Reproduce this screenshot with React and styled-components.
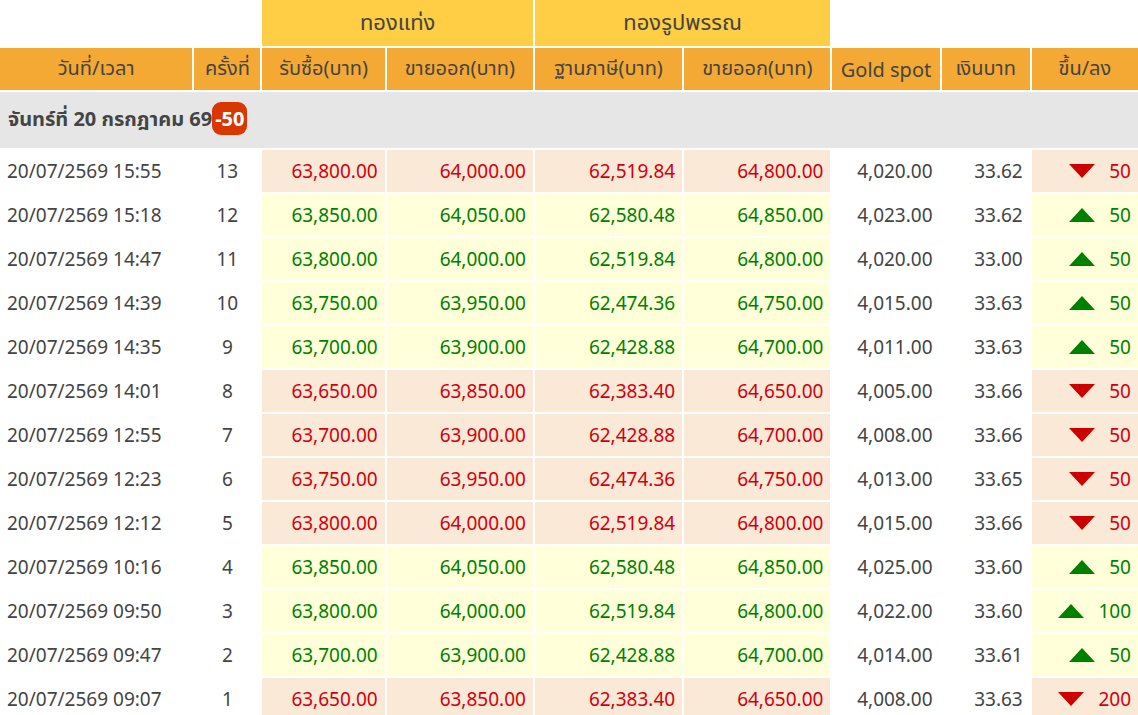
import React from "react";
import styled, { createGlobalStyle } from "styled-components";

const G = createGlobalStyle`
  body { margin: 0; background: #fff; font-family: "Noto Sans", "Noto Sans Thai", "DejaVu Sans", sans-serif; overflow: hidden; }
  * { box-sizing: border-box; }
`;
const Table = styled.table`
  width: 1142px; margin-left: -2px; margin-top: -2px; border-spacing: 2px; table-layout: fixed; font-size: 19px; color: #444;
`;
const Top = styled.th`
  background: ${p => (p.$blank ? "#fff" : "#ffce44")}; height: 46px; font-weight: 400; font-size: 22px; color: #444; padding: 0;
`;
const Head = styled.th`
  background: #f4a934; height: 42px; font-weight: 400; color: #444; padding: 0; font-size: 20px; white-space: nowrap;
`;
const Group = styled.td`
  background: #e6e6e6; height: 56px; font-weight: 700; padding: 0 8px; font-size: 20px;
`;
const Badge = styled.span`
  background: #d93600; color: #fff; border-radius: 9px; padding: 3px 3px; font-weight: 700;
`;
const Cell = styled.td`
  height: 42px; padding: 0 7px; text-align: ${p => p.$align || "right"};
  background: ${p => (p.$tone === "up" ? "#ffffd9" : p.$tone === "down" ? "#fbe9d7" : "#fff")};
  color: ${p => (p.$tone === "up" ? "#008000" : p.$tone === "down" ? "#d0000f" : "#444")};
  white-space: nowrap;
`;
const Tri = styled.svg` vertical-align: middle; margin-right: 14px; margin-top: -3px; `;

const rows = [
  ["15:55",13,"63,800.00","64,000.00","62,519.84","64,800.00","4,020.00","33.62",-50],
  ["15:18",12,"63,850.00","64,050.00","62,580.48","64,850.00","4,023.00","33.62",50],
  ["14:47",11,"63,800.00","64,000.00","62,519.84","64,800.00","4,020.00","33.00",50],
  ["14:39",10,"63,750.00","63,950.00","62,474.36","64,750.00","4,015.00","33.63",50],
  ["14:35",9,"63,700.00","63,900.00","62,428.88","64,700.00","4,011.00","33.63",50],
  ["14:01",8,"63,650.00","63,850.00","62,383.40","64,650.00","4,005.00","33.66",-50],
  ["12:55",7,"63,700.00","63,900.00","62,428.88","64,700.00","4,008.00","33.66",-50],
  ["12:23",6,"63,750.00","63,950.00","62,474.36","64,750.00","4,013.00","33.65",-50],
  ["12:12",5,"63,800.00","64,000.00","62,519.84","64,800.00","4,015.00","33.66",-50],
  ["10:16",4,"63,850.00","64,050.00","62,580.48","64,850.00","4,025.00","33.60",50],
  ["09:50",3,"63,800.00","64,000.00","62,519.84","64,800.00","4,022.00","33.60",100],
  ["09:47",2,"63,700.00","63,900.00","62,428.88","64,700.00","4,014.00","33.61",50],
  ["09:07",1,"63,650.00","63,850.00","62,383.40","64,650.00","4,008.00","33.63",-200],
];
const heads = ["วันที่/เวลา","ครั้งที่","รับซื้อ(บาท)","ขายออก(บาท)","ฐานภาษี(บาท)","ขายออก(บาท)","Gold spot","เงินบาท","ขึ้น/ลง"];

export default function App() {
  return (
    <>
      <G />
      <Table>
        <colgroup>
          {[192, 66, 122, 146, 147, 146, 107, 88, 106].map((w, i) => <col key={i} style={{ width: w }} />)}
        </colgroup>
        <thead>
          <tr>
            <Top $blank colSpan={2} />
            <Top colSpan={2}>ทองแท่ง</Top>
            <Top colSpan={2}>ทองรูปพรรณ</Top>
            <Top $blank colSpan={3} />
          </tr>
          <tr>
            {heads.map((h, i) => <Head key={i}>{h}</Head>)}
          </tr>
        </thead>
        <tbody>
          <tr><Group colSpan={9}>จันทร์ที่ 20 กรกฎาคม 69<Badge>-50</Badge></Group></tr>
          {rows.map(r => {
            const t = r[8] > 0 ? "up" : "down";
            return (
              <tr key={r[1]}>
                <Cell $align="left">20/07/2569 {r[0]}</Cell>
                <Cell $align="center">{r[1]}</Cell>
                <Cell $tone={t}>{r[2]}</Cell>
                <Cell $tone={t}>{r[3]}</Cell>
                <Cell $tone={t}>{r[4]}</Cell>
                <Cell $tone={t}>{r[5]}</Cell>
                <Cell>{r[6]}</Cell>
                <Cell>{r[7]}</Cell>
                <Cell $tone={t}>
                  <Tri width="26" height="14" viewBox="0 0 26 14">
                    {t === "up" ? <polygon points="13,0 26,14 0,14" fill="#008000" /> : <polygon points="0,0 26,0 13,14" fill="#cc0000" />}
                  </Tri>
                  {Math.abs(r[8])}
                </Cell>
              </tr>
            );
          })}
        </tbody>
      </Table>
    </>
  );
}
